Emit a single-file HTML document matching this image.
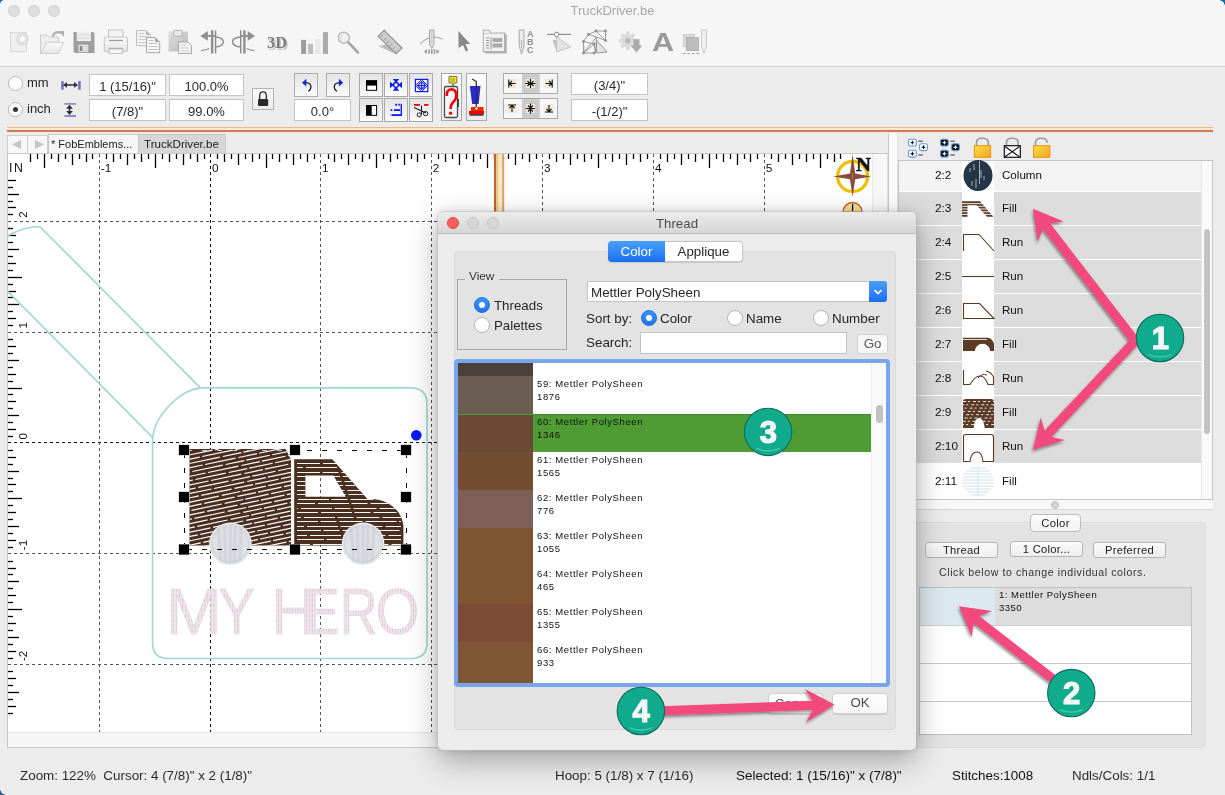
<!DOCTYPE html>
<html><head><meta charset="utf-8">
<style>
*{box-sizing:border-box}
html,body{margin:0;padding:0}
body{width:1225px;height:795px;overflow:hidden;position:relative;background:#ececec;will-change:transform;font-family:"Liberation Sans",sans-serif;color:#222}
.a{position:absolute}
.fld{position:absolute;background:#fff;border:1px solid #c4c4c4;font-size:13px;text-align:center;line-height:23px;color:#2a2a2a}
.btn{position:absolute;background:linear-gradient(#fafafa,#f0f0f0);border:1px solid #bdbdbd}
.tb{position:absolute;top:0;left:0;width:1225px;height:67px;background:#f6f6f6;border-bottom:1px solid #d3d3d3}
.tl{position:absolute;top:5px;width:12px;height:12px;border-radius:50%;background:#dddddd;border:1px solid #d0d0d0}
.radio{position:absolute;width:15px;height:15px;border-radius:50%;background:#fff;border:1px solid #b5b5b5}
.rsel{background:#fff}
.rsel::after{content:"";position:absolute;left:4px;top:4px;width:5px;height:5px;border-radius:50%;background:#333}
.t13{font-size:13px}
</style></head>
<body>
<!-- window top toolbar -->
<div class="tb"></div>
<div class="tl" style="left:8px"></div>
<div class="tl" style="left:28px"></div>
<div class="tl" style="left:48px"></div>
<div class="a" style="left:0;width:1225px;top:3px;text-align:center;font-size:13px;color:#a9a9a9;line-height:16px">TruckDriver.be</div>
<svg class="a" style="left:0;top:0" width="720" height="66" viewBox="0 0 720 66">
<defs><linearGradient id="lg1" x1="0" y1="0" x2="0" y2="1"><stop offset="0" stop-color="#fafafa"/><stop offset="1" stop-color="#e4e4e4"/></linearGradient><linearGradient id="lg2" x1="0" y1="0" x2="1" y2="1"><stop offset="0" stop-color="#e0e0e0"/><stop offset="1" stop-color="#b8b8b8"/></linearGradient></defs>
<rect x="10.5" y="32.5" width="16" height="19" fill="#efefef" stroke="#dadada"/>
<circle cx="22.5" cy="38.8" r="6.5" fill="#dedede"/>
<path d="M22.5,34.5 L23.7,37.5 L26.8,37.6 L24.4,39.6 L25.2,42.6 L22.5,40.9 L19.8,42.6 L20.6,39.6 L18.2,37.6 L21.3,37.5 Z" fill="#fbfbfb"/>
<path d="M40.5,53.5 V35 H47 L49,37 H58.5 V53.5 Z" fill="#ededed" stroke="#cfcfcf"/>
<path d="M40.5,53.5 L46.9,42.3 H63.5 L58.5,53.5 Z" fill="url(#lg1)" stroke="#cfcfcf"/>
<path d="M52.5,36.5 Q55,30.5 61,33" fill="none" stroke="#b4b4b4" stroke-width="2.4"/>
<path d="M59,31 L64,31 L64,37 Z" fill="#b0b0b0"/>
<path d="M73.5,32 H93 L94.5,33.5 V53 H75 L73.5,51.5 Z" fill="#9e9e9e"/>
<rect x="76.7" y="31.8" width="14.3" height="9.3" fill="#eeeeee"/>
<line x1="77" y1="35" x2="91" y2="35" stroke="#d2d2d2" stroke-width="0.8"/><line x1="77" y1="38" x2="91" y2="38" stroke="#d2d2d2" stroke-width="0.8"/>
<rect x="78.3" y="44.6" width="10" height="7.5" fill="#dcdcdc"/>
<rect x="79.8" y="46" width="2.5" height="5" fill="#8a8a8a"/>
<rect x="108.5" y="30" width="14.4" height="10" fill="#f3f3f3" stroke="#c4c4c4"/>
<rect x="104.3" y="37" width="23.2" height="14.6" rx="2" fill="url(#lg1)" stroke="#c2c2c2"/>
<line x1="109" y1="40.5" x2="123" y2="40.5" stroke="#9c9c9c" stroke-width="1.3"/>
<line x1="109" y1="48.5" x2="123" y2="48.5" stroke="#9c9c9c" stroke-width="1.3"/>
<rect x="109" y="49" width="13.5" height="4.5" fill="#f5f5f5" stroke="#c4c4c4"/>
<path d="M136.5,30.5 H146 L150.5,35 V45.8 H136.5 Z" fill="#f2f2f2" stroke="#bdbdbd"/>
<path d="M146,30.5 V35 H150.5 Z" fill="#b5b5b5"/>
<g stroke="#c8c8c8" stroke-width="0.9"><line x1="138.5" y1="33.5" x2="144" y2="33.5"/><line x1="138.5" y1="36.5" x2="148.5" y2="36.5"/><line x1="138.5" y1="39.5" x2="148.5" y2="39.5"/><line x1="138.5" y1="42.5" x2="148.5" y2="42.5"/></g>
<path d="M146.5,37.5 H155 L159.7,42 V52.7 H146.5 Z" fill="#f5f5f5" stroke="#a8a8a8"/>
<path d="M155,37.5 V42 H159.7 Z" fill="#aaaaaa"/>
<g stroke="#bdbdbd" stroke-width="0.9"><line x1="148.5" y1="40.5" x2="153.5" y2="40.5"/><line x1="148.5" y1="43.5" x2="157.5" y2="43.5"/><line x1="148.5" y1="46.5" x2="157.5" y2="46.5"/><line x1="148.5" y1="49.5" x2="157.5" y2="49.5"/></g>
<rect x="168.5" y="31.5" width="19.5" height="20" fill="url(#lg2)"/>
<rect x="173.6" y="30.3" width="8.6" height="6" rx="1" fill="#e8e8e8" stroke="#a5a5a5" stroke-width="0.8"/>
<path d="M178.5,42 H188 L191.5,45.5 V53.5 H178.5 Z" fill="#f3f3f3" stroke="#a9a9a9"/>
<g stroke="#c0c0c0" stroke-width="0.8"><line x1="180.5" y1="45" x2="186" y2="45"/><line x1="180.5" y1="48" x2="189.5" y2="48"/><line x1="180.5" y1="51" x2="189.5" y2="51"/></g>
<rect x="210.9" y="30.3" width="2.4" height="23.2" fill="#8f8f8f"/><rect x="214.8" y="30.3" width="1.5" height="23.2" fill="#8f8f8f"/>
<path d="M200.4,35.9 L207.8,31 V40.7 Z" fill="#8f8f8f"/><rect x="207" y="35" width="9" height="1.8" fill="#8f8f8f"/>
<path d="M216,37 Q223.5,38 223.3,42.3 Q223,46 216,47" fill="none" stroke="#8f8f8f" stroke-width="1.5"/>
<path d="M201.2,50.7 Q205,50.5 209.3,48.5" fill="none" stroke="#8f8f8f" stroke-width="1.2"/>
<rect x="240" y="30.3" width="1.5" height="23.2" fill="#8f8f8f"/><rect x="243.2" y="30.3" width="2.4" height="23.2" fill="#8f8f8f"/>
<path d="M255.1,35.9 L247.7,31 V40.7 Z" fill="#8f8f8f"/><rect x="240" y="35" width="9" height="1.8" fill="#8f8f8f"/>
<path d="M240,37 Q232,38 232.6,42.3 Q233,46 240,47" fill="none" stroke="#8f8f8f" stroke-width="1.5"/>
<path d="M254.5,50.7 Q250.5,50.5 246.5,48.5" fill="none" stroke="#8f8f8f" stroke-width="1.2"/>
<text x="268.5" y="49.5" font-family="Liberation Serif" font-weight="bold" font-size="17" fill="#c9c9c9" textLength="20" lengthAdjust="spacingAndGlyphs">3D</text>
<text x="267" y="48.3" font-family="Liberation Serif" font-weight="bold" font-size="17" fill="#7e7e7e" textLength="20" lengthAdjust="spacingAndGlyphs">3D</text>
<rect x="301.1" y="39.9" width="5" height="14" fill="#9d9d9d"/><rect x="308.1" y="43.8" width="4.9" height="10.2" fill="#bcbcbc"/><rect x="315.2" y="39.1" width="5.3" height="14.9" fill="#e9e9e9"/><rect x="322.9" y="32.1" width="5.1" height="21.9" fill="#ababab"/>
<line x1="348" y1="42" x2="358" y2="52.5" stroke="#a7a7a7" stroke-width="2.6" stroke-linecap="round"/>
<circle cx="343.8" cy="37.7" r="5.5" fill="#f0f0f0" stroke="#b8b8b8" stroke-width="1.4"/>
<path d="M341,39.5 Q340,36.5 342.5,35" fill="none" stroke="#c9c9c9" stroke-width="0.9"/>
<path d="M378.5,46 L394,53.5 L388,44 Z" fill="#bdbdbd"/>
<path d="M378.1,36.3 L384.2,30.2 L402,48.1 L396,53.7 Z" fill="#cbcbcb" stroke="#8c8c8c" stroke-width="1.1"/>
<g stroke="#8c8c8c" stroke-width="0.8"><line x1="383" y1="35" x2="381" y2="37"/><line x1="386" y1="38" x2="384" y2="40"/><line x1="389" y1="41" x2="387" y2="43"/><line x1="392" y1="44" x2="390" y2="46"/><line x1="395" y1="47" x2="393" y2="49"/></g>
<path d="M420.1,43.9 Q431,33 442.6,39.3" fill="none" stroke="#a8a8a8" stroke-width="1.1"/>
<path d="M429.5,30 H434 V44 L431.8,48.5 L429.5,44 Z" fill="#e6e6e6" stroke="#9c9c9c" stroke-width="0.9"/>
<line x1="431.8" y1="31" x2="431.8" y2="44" stroke="#b0b0b0" stroke-width="0.7"/>
<path d="M424,51.5 L427,49 V54 Z M439.5,51.5 L436.5,49 V54 Z" fill="#9a9a9a"/><rect x="428.3" y="49.2" width="1.6" height="4.6" fill="#9a9a9a"/><rect x="431" y="49.2" width="1.6" height="4.6" fill="#9a9a9a"/><rect x="433.7" y="49.2" width="1.6" height="4.6" fill="#9a9a9a"/>
<path d="M458.4,31.1 L470.1,43.9 L465.5,43.9 L468.2,50.5 L465.8,51.6 L463,45 L458.6,48 Z" fill="#888888"/>
<path d="M458.5,48.5 L457.5,52.3" stroke="#d8d8d8" stroke-width="0.8"/>
<path d="M485.5,53.6 L483.2,51.5 V33 H504.6 L506.8,35 V53.6 Z" fill="#b0b0b0"/>
<rect x="483.2" y="33" width="21.4" height="18.5" fill="#f1f1f1" stroke="#a9a9a9" stroke-width="0.9"/>
<path d="M483.2,33 V30.1 H489.5 L490.5,33" fill="#f1f1f1" stroke="#a9a9a9" stroke-width="0.9"/>
<g stroke="#8a8a8a" stroke-width="0.9"><line x1="486" y1="38" x2="489" y2="38"/><line x1="486" y1="40.5" x2="489" y2="40.5"/><line x1="486" y1="43" x2="489" y2="43"/><line x1="486" y1="45.5" x2="489" y2="45.5"/><line x1="486" y1="48" x2="489" y2="48"/><line x1="491" y1="37" x2="491" y2="49.5"/></g>
<rect x="492.5" y="38" width="9.8" height="4" fill="#a8a8a8"/><rect x="492.5" y="43.5" width="9.8" height="4" fill="#a8a8a8"/>
<path d="M519.2,30 H524 V46 L521.6,54 L519.2,46 Z" fill="#ececec" stroke="#a0a0a0" stroke-width="0.9"/>
<line x1="521.6" y1="40" x2="521.6" y2="48" stroke="#a0a0a0" stroke-width="0.8"/>
<text x="527" y="37.3" font-family="Liberation Sans" font-weight="bold" font-size="9" fill="#8e8e8e">A</text><text x="527" y="45.3" font-family="Liberation Sans" font-weight="bold" font-size="9" fill="#8e8e8e">B</text><text x="527" y="53.3" font-family="Liberation Sans" font-weight="bold" font-size="9" fill="#8e8e8e">C</text>
<line x1="547" y1="34.4" x2="571" y2="34.4" stroke="#8e8e8e" stroke-width="1.2"/>
<path d="M552.5,40 L556.6,52 L557,40 Z" fill="#c3c3c3"/>
<path d="M556.6,36.5 L571,47 L556.6,52 Z" fill="#e3e3e3" stroke="#bcbcbc" stroke-width="0.8"/>
<circle cx="556.6" cy="34.4" r="2.2" fill="#fafafa" stroke="#8e8e8e" stroke-width="1"/>
<g fill="none" stroke="#9a9a9a" stroke-width="1">
<path d="M583.5,53 V41.5 L588.5,34.5 L596,31 H605.5 V40.5 L596.5,37 Z M596,31 L605.5,40.5 M588.5,34.5 L596.5,37 L595.5,53 M583.5,41.5 L594,44 M583.5,53 L594,44 L595.5,53 Z M583.5,41.5 L584,53"/>
<path d="M596.5,40 L607,52 L596.5,53 Z" fill="#e4e4e4"/>
</g>
<g fill="#8f8f8f"><circle cx="588.5" cy="34.5" r="1.4"/><circle cx="596" cy="31" r="1.4"/><circle cx="605.5" cy="31" r="1.4"/><circle cx="605.5" cy="40.5" r="1.4"/><circle cx="583.5" cy="41.5" r="1.4"/><circle cx="594" cy="44" r="1.4"/><circle cx="583.5" cy="53" r="1.4"/><circle cx="594" cy="53" r="1.4"/></g>
<g fill="#dcdcdc"><rect x="626" y="31.5" width="3.6" height="4" transform="rotate(0 627.8 40.7)"/><rect x="626" y="31.5" width="3.6" height="4" transform="rotate(45 627.8 40.7)"/><rect x="626" y="31.5" width="3.6" height="4" transform="rotate(90 627.8 40.7)"/><rect x="626" y="31.5" width="3.6" height="4" transform="rotate(135 627.8 40.7)"/><rect x="626" y="31.5" width="3.6" height="4" transform="rotate(180 627.8 40.7)"/><rect x="626" y="31.5" width="3.6" height="4" transform="rotate(225 627.8 40.7)"/><rect x="626" y="31.5" width="3.6" height="4" transform="rotate(270 627.8 40.7)"/><rect x="626" y="31.5" width="3.6" height="4" transform="rotate(315 627.8 40.7)"/><circle cx="627.8" cy="40.7" r="6.8"/></g>
<circle cx="627.8" cy="40.7" r="2.8" fill="#b9b9b9"/>
<path d="M633.5,39.3 H639.5 V45.5 H642.3 L636.5,52.7 L630.7,45.5 H633.5 Z" fill="#ababab"/>
<text x="652" y="50.6" font-family="Liberation Sans" font-weight="bold" font-size="25" fill="#9a9a9a" textLength="22.2" lengthAdjust="spacingAndGlyphs">A</text>
<rect x="683.5" y="34.5" width="11" height="12" fill="#dadada" stroke="#c4c4c4" stroke-width="0.8"/>
<rect x="686.5" y="37.5" width="12" height="13" fill="#bdbdbd" stroke="#aaaaaa" stroke-width="0.8"/>
<path d="M701.5,30 H706.5 V47 L704,53 L701.5,47 Z" fill="#f0f0f0" stroke="#bdbdbd" stroke-width="0.8"/>
<line x1="683" y1="53.5" x2="701" y2="53.5" stroke="#8e8e8e" stroke-width="0.9" stroke-dasharray="2.5 2"/>
</svg>

<!-- toolbar 2 -->
<div class="radio" style="left:8px;top:76px"></div>
<div class="a t13" style="left:27px;top:75px;line-height:16px;color:#262626">mm</div>
<div class="radio rsel" style="left:8px;top:102px"></div>
<div class="a t13" style="left:27px;top:101px;line-height:16px;color:#262626">inch</div>
<div class="fld" style="left:89px;top:74px;width:77px;height:22px">1 (15/16)"</div>
<div class="fld" style="left:169px;top:74px;width:75px;height:22px">100.0%</div>
<div class="fld" style="left:89px;top:99px;width:77px;height:22px">(7/8)"</div>
<div class="fld" style="left:169px;top:99px;width:75px;height:22px">99.0%</div>

<div class="fld" style="left:294px;top:99px;width:57px;height:22px">0.0°</div>
<svg class="a" style="left:0;top:66px" width="720" height="62" viewBox="0 66 720 62">
<defs><linearGradient id="bg2" x1="0" y1="0" x2="0" y2="1"><stop offset="0" stop-color="#e3e3e3"/><stop offset="1" stop-color="#fbfbfb"/></linearGradient><linearGradient id="bg3" x1="0" y1="0" x2="0" y2="1"><stop offset="0" stop-color="#fdfdfd"/><stop offset="1" stop-color="#ececec"/></linearGradient></defs>
<rect x="61.2" y="81.1" width="2.5" height="8.6" fill="#7070b8"/><rect x="78.2" y="81.1" width="2.5" height="8.6" fill="#7070b8"/>
<path d="M63,84.9 L67,82 V87.8 Z M78,84.9 L74,82 V87.8 Z" fill="#2c2c3c"/><rect x="66" y="84.2" width="9" height="1.5" fill="#2c2c3c"/>
<rect x="64.5" y="103.2" width="11.5" height="1.4" fill="#7878b0"/><rect x="64.5" y="115.2" width="11.5" height="1.6" fill="#7070b8"/>
<path d="M69.5,104.8 L66.2,108.8 H72.8 Z M69.5,115 L66.2,111 H72.8 Z" fill="#2c2c3c"/><rect x="68.8" y="108" width="1.5" height="4" fill="#2c2c3c"/>
<rect x="252.5" y="88.5" width="21" height="21" fill="url(#bg3)" stroke="#b2b2b2"/>
<path d="M259.7,99.5 V95.5 Q259.7,91.8 263,91.8 Q266.3,91.8 266.3,95.5 V99.5" fill="none" stroke="#2a2a2a" stroke-width="1.3"/>
<rect x="258" y="99" width="10.2" height="7" rx="1.2" fill="#2a2a2a"/>
<rect x="294.5" y="73.5" width="23" height="23" fill="url(#bg2)" stroke="#adadad"/>
<rect x="326.5" y="73.5" width="23" height="23" fill="url(#bg2)" stroke="#adadad"/>
<path d="M302,82.7 L306.3,78.7 V86.5 Z" fill="#0d28f0"/>
<path d="M305.5,82.7 Q311,83 311,87 Q311,89.5 308.3,91.2" fill="none" stroke="#111" stroke-width="1.2"/>
<path d="M343.2,82.7 L338.9,78.7 V86.5 Z" fill="#0d28f0"/>
<path d="M339.7,82.7 Q334.2,83 334.2,87 Q334.2,89.5 336.9,91.2" fill="none" stroke="#111" stroke-width="1.2"/>
<rect x="359.5" y="73.5" width="23" height="23" fill="url(#bg2)" stroke="#a9a9a9"/>
<rect x="359.5" y="98.5" width="23" height="23" fill="url(#bg2)" stroke="#a9a9a9"/>
<rect x="384.5" y="73.5" width="23" height="23" fill="url(#bg2)" stroke="#a9a9a9"/>
<rect x="384.5" y="98.5" width="23" height="23" fill="url(#bg2)" stroke="#a9a9a9"/>
<rect x="409.5" y="73.5" width="23" height="23" fill="url(#bg2)" stroke="#a9a9a9"/>
<rect x="409.5" y="98.5" width="23" height="23" fill="url(#bg2)" stroke="#a9a9a9"/>
<rect x="366" y="80.1" width="11.1" height="10.7" fill="#000"/><rect x="367.2" y="85.6" width="8.8" height="4.2" fill="#fff"/>
<rect x="366" y="105" width="11.1" height="10.8" fill="#000"/><rect x="371.7" y="106" width="4.4" height="8.8" fill="#fff"/>
<path d="M392.8,79 H399.2 L396,83 Z M392.8,90.8 H399.2 L396,86.8 Z M390,81.7 V88.1 L394,84.9 Z M402,81.7 V88.1 L398,84.9 Z" fill="#0d1cf0"/>
<circle cx="396" cy="84.9" r="2.4" fill="#f6f2c8" stroke="#0d1cf0" stroke-width="1.3"/>
<rect x="415.4" y="79.4" width="12.4" height="12.2" fill="#fafafa" stroke="#0d1cf0" stroke-width="1.2"/>
<path d="M421.6,79.6 L427.6,85.5 L421.6,91.4 L415.6,85.5 Z" fill="none" stroke="#0d1cf0" stroke-width="1"/>
<circle cx="421.6" cy="85.5" r="3" fill="none" stroke="#0d1cf0" stroke-width="1.1"/>
<path d="M421.6,81 V90 M417,85.5 H426.2" stroke="#0d1cf0" stroke-width="1.1"/>
<g fill="#0d1cf0"><rect x="395.2" y="103.8" width="2" height="1.8"/><rect x="398.3" y="103.8" width="1.6" height="1.8"/><rect x="400.6" y="103.8" width="1.4" height="12.2"/><rect x="390.2" y="114.2" width="11.8" height="1.8"/><rect x="394" y="109.2" width="6" height="1.8"/><rect x="390.5" y="109.2" width="1.8" height="1.8"/><rect x="390.2" y="114.2" width="1.8" height="1.8" fill="#fff" opacity="0.6"/></g>
<rect x="414" y="104" width="6" height="1.8" fill="#f00000"/><rect x="424" y="104" width="4.4" height="1.8" fill="#f00000"/>
<path d="M414,107.5 L426,113 M421.5,105.5 L421.5,114.5" stroke="#222" stroke-width="1.2" fill="none"/>
<circle cx="419.2" cy="114.8" r="2" fill="none" stroke="#222" stroke-width="1"/><circle cx="425.6" cy="113.6" r="2.2" fill="none" stroke="#222" stroke-width="1"/>
<rect x="441.5" y="73.5" width="20" height="47" fill="url(#bg3)" stroke="#a9a9a9"/>
<rect x="444.5" y="86.5" width="13" height="31" rx="1.5" fill="#f7f7f7" stroke="#4a4a4a" stroke-width="1.3"/>
<rect x="457.5" y="99" width="1.4" height="8" fill="#333"/>
<path d="M449,76.5 H456.8 V83 H454.5 L453,86 L452.5,83 H449 Z" fill="#f7f000" stroke="#555" stroke-width="0.8"/>
<line x1="450.5" y1="79" x2="455" y2="79" stroke="#777" stroke-width="0.8"/><line x1="450.5" y1="81" x2="455" y2="81" stroke="#777" stroke-width="0.8"/>
<path d="M446.8,96 Q446.5,89.5 451.3,89.3 Q456.3,89.3 456.3,95.5 Q456.3,99.5 452.8,102.5 Q450.6,104.8 450.6,109" fill="none" stroke="#f00000" stroke-width="2.6"/><circle cx="450.6" cy="113.3" r="1.7" fill="#f00000"/>
<rect x="466.5" y="73.5" width="20" height="47" fill="url(#bg3)" stroke="#a9a9a9"/>
<path d="M469.8,86 H480.5 L478.6,104 H472.2 Z" fill="#2a2ad0"/>
<path d="M472,79 L476.3,81.5 V108" fill="none" stroke="#333" stroke-width="1.3"/>
<rect x="471" y="107" width="12.5" height="4" fill="#f02800"/><rect x="469" y="111" width="15" height="3" fill="#f00000"/><rect x="469.5" y="114" width="14" height="1.8" fill="#444"/>
<circle cx="476.5" cy="108.5" r="1.2" fill="#eee"/>
<rect x="503.5" y="73.5" width="54" height="20" fill="#f6f6f6" stroke="#a9a9a9"/>
<rect x="522" y="74.0" width="17.7" height="19" fill="#cbcbcb"/>
<rect x="503.5" y="98.5" width="54" height="20" fill="#f6f6f6" stroke="#a9a9a9"/>
<rect x="522" y="99.0" width="17.7" height="19" fill="#cbcbcb"/>
<rect x="507.5" y="79.0" width="9" height="9" fill="#efe9d6"/>
<rect x="526.0" y="79.0" width="9" height="9" fill="#efe9d6"/>
<rect x="544.5" y="79.0" width="9" height="9" fill="#efe9d6"/>
<rect x="507.5" y="104.0" width="9" height="9" fill="#efe9d6"/>
<rect x="526.0" y="104.0" width="9" height="9" fill="#efe9d6"/>
<rect x="544.5" y="104.0" width="9" height="9" fill="#efe9d6"/>
<g stroke="#111" stroke-width="1.1" fill="none">
<path d="M508.8,79.5 V87.5 M509.5,83.5 H515.5 M512,81 L509.5,83.5 L512,86"/>
<path d="M530.5,79 V88 M525.5,83.5 H535.5 M527.5,81 L530,83.5 L527.5,86 M533.5,81 L531,83.5 L533.5,86"/>
<path d="M552.2,79.5 V87.5 M545.5,83.5 H551.5 M549,81 L551.5,83.5 L549,86"/>
<path d="M508,105 H516 M512,105.5 V112 M509.5,108 L512,105.5 L514.5,108"/>
<path d="M526,108.5 H535 M530.5,103.5 V113.5 M528,105.5 L530.5,108 L533,105.5 M528,111.5 L530.5,109 L533,111.5"/>
<path d="M545,112 H553 M549,105 V111.5 M546.5,109 L549,111.5 L551.5,109"/>
</g>
</svg>
<div class="fld" style="left:571px;top:73px;width:77px;height:22px">(3/4)"</div>
<div class="fld" style="left:571px;top:99px;width:77px;height:22px">-(1/2)"</div>

<!-- orange line -->
<div class="a" style="left:7px;top:127px;width:1206px;height:5px;background:linear-gradient(#e9b97c 0,#ecc08a 1.5px,#fde9da 1.5px,#fbe3d2 3px,#d58050 3px,#cf7848 5px)"></div>
<div class="a" style="left:888px;top:133px;width:10px;height:615px;background:#fcfcfc;border-left:1.5px solid #c9c9c9;border-right:1px solid #dedede"></div>

<!-- tabs -->
<div class="a" style="left:7px;top:135px;width:21px;height:19px;background:#f7f7f7;border:1px solid #d0d0d0"></div>
<div class="a" style="left:27px;top:135px;width:21px;height:19px;background:#f7f7f7;border:1px solid #d0d0d0"></div>
<svg class="a" style="left:7px;top:135px" width="42" height="19"><path d="M5,9.5 L14,5 V14 Z M37,9.5 L28,5 V14 Z" fill="#c6c6c6"/></svg>
<div class="a" style="left:48px;top:134px;width:91px;height:20px;background:#f6f6f6;border:1px solid #c9c9c9;border-bottom:none"></div>
<div class="a" style="left:138px;top:134px;width:88px;height:20px;background:#d6d6d6;border:1px solid #c9c9c9;border-bottom:none"></div>
<div class="a" style="left:51px;top:137px;font-size:11px;line-height:14px;color:#222">* FobEmblems...</div>
<div class="a" style="left:144px;top:137px;font-size:11.6px;line-height:14px;color:#222">TruckDriver.be</div>

<!-- canvas -->
<svg class="a" style="left:0;top:0" width="1225" height="795" viewBox="0 0 1225 795">
<defs><clipPath id="cv"><rect x="8" y="154" width="864" height="578"/></clipPath></defs>
<rect x="7.5" y="153.5" width="880" height="594" fill="#fff" stroke="#c8c8c8"/>
<rect x="872" y="154" width="15.5" height="578" fill="#f7f7f7"/>
<line x1="872.5" y1="154" x2="872.5" y2="732" stroke="#e9e9e9"/>
<rect x="8" y="732" width="879.5" height="15" fill="#f7f7f7"/>
<line x1="8" y1="732.5" x2="887" y2="732.5" stroke="#e6e6e6"/>
<g clip-path="url(#cv)">
<rect x="29.85" y="154" width="1.3" height="8" fill="#000"/>
<rect x="36.85" y="154" width="1.3" height="5" fill="#000"/>
<rect x="43.85" y="154" width="1.3" height="14" fill="#000"/>
<rect x="50.85" y="154" width="1.3" height="5" fill="#000"/>
<rect x="57.85" y="154" width="1.3" height="8" fill="#000"/>
<rect x="64.85" y="154" width="1.3" height="5" fill="#000"/>
<rect x="71.85" y="154" width="1.3" height="11" fill="#000"/>
<rect x="78.85" y="154" width="1.3" height="5" fill="#000"/>
<rect x="85.85" y="154" width="1.3" height="8" fill="#000"/>
<rect x="91.85" y="154" width="1.3" height="5" fill="#000"/>
<rect x="105.85" y="154" width="1.3" height="5" fill="#000"/>
<rect x="112.85" y="154" width="1.3" height="8" fill="#000"/>
<rect x="119.85" y="154" width="1.3" height="5" fill="#000"/>
<rect x="126.85" y="154" width="1.3" height="11" fill="#000"/>
<rect x="133.85" y="154" width="1.3" height="5" fill="#000"/>
<rect x="140.85" y="154" width="1.3" height="8" fill="#000"/>
<rect x="147.85" y="154" width="1.3" height="5" fill="#000"/>
<rect x="154.85" y="154" width="1.3" height="14" fill="#000"/>
<rect x="161.85" y="154" width="1.3" height="5" fill="#000"/>
<rect x="168.85" y="154" width="1.3" height="8" fill="#000"/>
<rect x="175.85" y="154" width="1.3" height="5" fill="#000"/>
<rect x="182.85" y="154" width="1.3" height="11" fill="#000"/>
<rect x="189.85" y="154" width="1.3" height="5" fill="#000"/>
<rect x="196.85" y="154" width="1.3" height="8" fill="#000"/>
<rect x="203.85" y="154" width="1.3" height="5" fill="#000"/>
<rect x="216.85" y="154" width="1.3" height="5" fill="#000"/>
<rect x="223.85" y="154" width="1.3" height="8" fill="#000"/>
<rect x="230.85" y="154" width="1.3" height="5" fill="#000"/>
<rect x="237.85" y="154" width="1.3" height="11" fill="#000"/>
<rect x="244.85" y="154" width="1.3" height="5" fill="#000"/>
<rect x="251.85" y="154" width="1.3" height="8" fill="#000"/>
<rect x="258.85" y="154" width="1.3" height="5" fill="#000"/>
<rect x="265.85" y="154" width="1.3" height="14" fill="#000"/>
<rect x="271.85" y="154" width="1.3" height="5" fill="#000"/>
<rect x="278.85" y="154" width="1.3" height="8" fill="#000"/>
<rect x="285.85" y="154" width="1.3" height="5" fill="#000"/>
<rect x="292.85" y="154" width="1.3" height="11" fill="#000"/>
<rect x="299.85" y="154" width="1.3" height="5" fill="#000"/>
<rect x="306.85" y="154" width="1.3" height="8" fill="#000"/>
<rect x="313.85" y="154" width="1.3" height="5" fill="#000"/>
<rect x="327.85" y="154" width="1.3" height="5" fill="#000"/>
<rect x="333.85" y="154" width="1.3" height="8" fill="#000"/>
<rect x="340.85" y="154" width="1.3" height="5" fill="#000"/>
<rect x="347.85" y="154" width="1.3" height="11" fill="#000"/>
<rect x="354.85" y="154" width="1.3" height="5" fill="#000"/>
<rect x="361.85" y="154" width="1.3" height="8" fill="#000"/>
<rect x="368.85" y="154" width="1.3" height="5" fill="#000"/>
<rect x="375.85" y="154" width="1.3" height="14" fill="#000"/>
<rect x="382.85" y="154" width="1.3" height="5" fill="#000"/>
<rect x="389.85" y="154" width="1.3" height="8" fill="#000"/>
<rect x="396.85" y="154" width="1.3" height="5" fill="#000"/>
<rect x="403.85" y="154" width="1.3" height="11" fill="#000"/>
<rect x="410.85" y="154" width="1.3" height="5" fill="#000"/>
<rect x="416.85" y="154" width="1.3" height="8" fill="#000"/>
<rect x="423.85" y="154" width="1.3" height="5" fill="#000"/>
<rect x="437.85" y="154" width="1.3" height="5" fill="#000"/>
<rect x="444.85" y="154" width="1.3" height="8" fill="#000"/>
<rect x="451.85" y="154" width="1.3" height="5" fill="#000"/>
<rect x="458.85" y="154" width="1.3" height="11" fill="#000"/>
<rect x="465.85" y="154" width="1.3" height="5" fill="#000"/>
<rect x="472.85" y="154" width="1.3" height="8" fill="#000"/>
<rect x="479.85" y="154" width="1.3" height="5" fill="#000"/>
<rect x="486.85" y="154" width="1.3" height="14" fill="#000"/>
<rect x="493.85" y="154" width="1.3" height="5" fill="#000"/>
<rect x="500.85" y="154" width="1.3" height="8" fill="#000"/>
<rect x="507.85" y="154" width="1.3" height="5" fill="#000"/>
<rect x="514.85" y="154" width="1.3" height="11" fill="#000"/>
<rect x="521.85" y="154" width="1.3" height="5" fill="#000"/>
<rect x="528.85" y="154" width="1.3" height="8" fill="#000"/>
<rect x="535.85" y="154" width="1.3" height="5" fill="#000"/>
<rect x="548.85" y="154" width="1.3" height="5" fill="#000"/>
<rect x="555.85" y="154" width="1.3" height="8" fill="#000"/>
<rect x="562.85" y="154" width="1.3" height="5" fill="#000"/>
<rect x="569.85" y="154" width="1.3" height="11" fill="#000"/>
<rect x="576.85" y="154" width="1.3" height="5" fill="#000"/>
<rect x="583.85" y="154" width="1.3" height="8" fill="#000"/>
<rect x="590.85" y="154" width="1.3" height="5" fill="#000"/>
<rect x="597.85" y="154" width="1.3" height="14" fill="#000"/>
<rect x="604.85" y="154" width="1.3" height="5" fill="#000"/>
<rect x="611.85" y="154" width="1.3" height="8" fill="#000"/>
<rect x="618.85" y="154" width="1.3" height="5" fill="#000"/>
<rect x="625.85" y="154" width="1.3" height="11" fill="#000"/>
<rect x="632.85" y="154" width="1.3" height="5" fill="#000"/>
<rect x="639.85" y="154" width="1.3" height="8" fill="#000"/>
<rect x="646.85" y="154" width="1.3" height="5" fill="#000"/>
<rect x="659.85" y="154" width="1.3" height="5" fill="#000"/>
<rect x="666.85" y="154" width="1.3" height="8" fill="#000"/>
<rect x="673.85" y="154" width="1.3" height="5" fill="#000"/>
<rect x="680.85" y="154" width="1.3" height="11" fill="#000"/>
<rect x="687.85" y="154" width="1.3" height="5" fill="#000"/>
<rect x="694.85" y="154" width="1.3" height="8" fill="#000"/>
<rect x="701.85" y="154" width="1.3" height="5" fill="#000"/>
<rect x="708.85" y="154" width="1.3" height="14" fill="#000"/>
<rect x="715.85" y="154" width="1.3" height="5" fill="#000"/>
<rect x="722.85" y="154" width="1.3" height="8" fill="#000"/>
<rect x="729.85" y="154" width="1.3" height="5" fill="#000"/>
<rect x="736.85" y="154" width="1.3" height="11" fill="#000"/>
<rect x="743.85" y="154" width="1.3" height="5" fill="#000"/>
<rect x="749.85" y="154" width="1.3" height="8" fill="#000"/>
<rect x="756.85" y="154" width="1.3" height="5" fill="#000"/>
<rect x="770.85" y="154" width="1.3" height="5" fill="#000"/>
<rect x="777.85" y="154" width="1.3" height="8" fill="#000"/>
<rect x="784.85" y="154" width="1.3" height="5" fill="#000"/>
<rect x="791.85" y="154" width="1.3" height="11" fill="#000"/>
<rect x="798.85" y="154" width="1.3" height="5" fill="#000"/>
<rect x="805.85" y="154" width="1.3" height="8" fill="#000"/>
<rect x="812.85" y="154" width="1.3" height="5" fill="#000"/>
<rect x="819.85" y="154" width="1.3" height="14" fill="#000"/>
<rect x="826.85" y="154" width="1.3" height="5" fill="#000"/>
<rect x="833.85" y="154" width="1.3" height="8" fill="#000"/>
<rect x="839.85" y="154" width="1.3" height="5" fill="#000"/>
<rect x="8" y="179.85" width="8" height="1.3" fill="#000"/>
<rect x="8" y="186.85" width="5" height="1.3" fill="#000"/>
<rect x="8" y="193.85" width="11" height="1.3" fill="#000"/>
<rect x="8" y="200.85" width="5" height="1.3" fill="#000"/>
<rect x="8" y="206.85" width="8" height="1.3" fill="#000"/>
<rect x="8" y="213.85" width="5" height="1.3" fill="#000"/>
<rect x="8" y="227.85" width="5" height="1.3" fill="#000"/>
<rect x="8" y="234.85" width="8" height="1.3" fill="#000"/>
<rect x="8" y="241.85" width="5" height="1.3" fill="#000"/>
<rect x="8" y="248.85" width="11" height="1.3" fill="#000"/>
<rect x="8" y="255.85" width="5" height="1.3" fill="#000"/>
<rect x="8" y="262.85" width="8" height="1.3" fill="#000"/>
<rect x="8" y="269.85" width="5" height="1.3" fill="#000"/>
<rect x="8" y="276.85" width="14" height="1.3" fill="#000"/>
<rect x="8" y="283.85" width="5" height="1.3" fill="#000"/>
<rect x="8" y="290.85" width="8" height="1.3" fill="#000"/>
<rect x="8" y="296.85" width="5" height="1.3" fill="#000"/>
<rect x="8" y="303.85" width="11" height="1.3" fill="#000"/>
<rect x="8" y="310.85" width="5" height="1.3" fill="#000"/>
<rect x="8" y="317.85" width="8" height="1.3" fill="#000"/>
<rect x="8" y="324.85" width="5" height="1.3" fill="#000"/>
<rect x="8" y="338.85" width="5" height="1.3" fill="#000"/>
<rect x="8" y="345.85" width="8" height="1.3" fill="#000"/>
<rect x="8" y="352.85" width="5" height="1.3" fill="#000"/>
<rect x="8" y="359.85" width="11" height="1.3" fill="#000"/>
<rect x="8" y="366.85" width="5" height="1.3" fill="#000"/>
<rect x="8" y="373.85" width="8" height="1.3" fill="#000"/>
<rect x="8" y="380.85" width="5" height="1.3" fill="#000"/>
<rect x="8" y="387.85" width="14" height="1.3" fill="#000"/>
<rect x="8" y="393.85" width="5" height="1.3" fill="#000"/>
<rect x="8" y="400.85" width="8" height="1.3" fill="#000"/>
<rect x="8" y="407.85" width="5" height="1.3" fill="#000"/>
<rect x="8" y="414.85" width="11" height="1.3" fill="#000"/>
<rect x="8" y="421.85" width="5" height="1.3" fill="#000"/>
<rect x="8" y="428.85" width="8" height="1.3" fill="#000"/>
<rect x="8" y="435.85" width="5" height="1.3" fill="#000"/>
<rect x="8" y="449.85" width="5" height="1.3" fill="#000"/>
<rect x="8" y="456.85" width="8" height="1.3" fill="#000"/>
<rect x="8" y="463.85" width="5" height="1.3" fill="#000"/>
<rect x="8" y="470.85" width="11" height="1.3" fill="#000"/>
<rect x="8" y="477.85" width="5" height="1.3" fill="#000"/>
<rect x="8" y="483.85" width="8" height="1.3" fill="#000"/>
<rect x="8" y="490.85" width="5" height="1.3" fill="#000"/>
<rect x="8" y="497.85" width="14" height="1.3" fill="#000"/>
<rect x="8" y="504.85" width="5" height="1.3" fill="#000"/>
<rect x="8" y="511.85" width="8" height="1.3" fill="#000"/>
<rect x="8" y="518.85" width="5" height="1.3" fill="#000"/>
<rect x="8" y="525.85" width="11" height="1.3" fill="#000"/>
<rect x="8" y="532.85" width="5" height="1.3" fill="#000"/>
<rect x="8" y="539.85" width="8" height="1.3" fill="#000"/>
<rect x="8" y="546.85" width="5" height="1.3" fill="#000"/>
<rect x="8" y="560.85" width="5" height="1.3" fill="#000"/>
<rect x="8" y="567.85" width="8" height="1.3" fill="#000"/>
<rect x="8" y="573.85" width="5" height="1.3" fill="#000"/>
<rect x="8" y="580.85" width="11" height="1.3" fill="#000"/>
<rect x="8" y="587.85" width="5" height="1.3" fill="#000"/>
<rect x="8" y="594.85" width="8" height="1.3" fill="#000"/>
<rect x="8" y="601.85" width="5" height="1.3" fill="#000"/>
<rect x="8" y="608.85" width="14" height="1.3" fill="#000"/>
<rect x="8" y="615.85" width="5" height="1.3" fill="#000"/>
<rect x="8" y="622.85" width="8" height="1.3" fill="#000"/>
<rect x="8" y="629.85" width="5" height="1.3" fill="#000"/>
<rect x="8" y="636.85" width="11" height="1.3" fill="#000"/>
<rect x="8" y="643.85" width="5" height="1.3" fill="#000"/>
<rect x="8" y="650.85" width="8" height="1.3" fill="#000"/>
<rect x="8" y="657.85" width="5" height="1.3" fill="#000"/>
<rect x="8" y="670.85" width="5" height="1.3" fill="#000"/>
<rect x="8" y="677.85" width="8" height="1.3" fill="#000"/>
<rect x="8" y="684.85" width="5" height="1.3" fill="#000"/>
<rect x="8" y="691.85" width="11" height="1.3" fill="#000"/>
<rect x="8" y="698.85" width="5" height="1.3" fill="#000"/>
<rect x="8" y="705.85" width="8" height="1.3" fill="#000"/>
<rect x="8" y="712.85" width="5" height="1.3" fill="#000"/>
<line x1="99.50" y1="154" x2="99.50" y2="732" stroke="#555" stroke-width="1" stroke-dasharray="3 3"/>
<line x1="210.50" y1="154" x2="210.50" y2="732" stroke="#111" stroke-width="1" stroke-dasharray="3 3"/>
<line x1="320.50" y1="154" x2="320.50" y2="732" stroke="#555" stroke-width="1" stroke-dasharray="3 3"/>
<line x1="431.50" y1="154" x2="431.50" y2="732" stroke="#555" stroke-width="1" stroke-dasharray="3 3"/>
<line x1="542.50" y1="154" x2="542.50" y2="732" stroke="#555" stroke-width="1" stroke-dasharray="3 3"/>
<line x1="653.50" y1="154" x2="653.50" y2="732" stroke="#555" stroke-width="1" stroke-dasharray="3 3"/>
<line x1="764.50" y1="154" x2="764.50" y2="732" stroke="#555" stroke-width="1" stroke-dasharray="3 3"/>
<line x1="8" y1="221.50" x2="872" y2="221.50" stroke="#555" stroke-width="1" stroke-dasharray="3 3"/>
<line x1="8" y1="332.50" x2="872" y2="332.50" stroke="#555" stroke-width="1" stroke-dasharray="3 3"/>
<line x1="8" y1="442.50" x2="872" y2="442.50" stroke="#111" stroke-width="1" stroke-dasharray="3 3"/>
<line x1="8" y1="553.50" x2="872" y2="553.50" stroke="#555" stroke-width="1" stroke-dasharray="3 3"/>
<line x1="8" y1="664.50" x2="872" y2="664.50" stroke="#555" stroke-width="1" stroke-dasharray="3 3"/>
<text x="9" y="171.8" font-size="12.3" fill="#111" font-family="Liberation Sans" letter-spacing="1.6">IN</text>
<text x="100.8" y="172" font-size="11.8" fill="#111" font-family="Liberation Sans">-1</text>
<text x="211.9" y="172" font-size="11.8" fill="#111" font-family="Liberation Sans">0</text>
<text x="322.0" y="172" font-size="11.8" fill="#111" font-family="Liberation Sans">1</text>
<text x="432.7" y="172" font-size="11.8" fill="#111" font-family="Liberation Sans">2</text>
<text x="543.9" y="172" font-size="11.8" fill="#111" font-family="Liberation Sans">3</text>
<text x="654.9" y="172" font-size="11.8" fill="#111" font-family="Liberation Sans">4</text>
<text x="765.7" y="172" font-size="11.8" fill="#111" font-family="Liberation Sans">5</text>
<text transform="translate(27,661.0) rotate(-90)" x="0" y="0" font-size="11.5" fill="#111" font-family="Liberation Sans">-2</text>
<text transform="translate(27,550.2) rotate(-90)" x="0" y="0" font-size="11.5" fill="#111" font-family="Liberation Sans">-1</text>
<text transform="translate(27,439.4) rotate(-90)" x="0" y="0" font-size="11.5" fill="#111" font-family="Liberation Sans">0</text>
<text transform="translate(27,328.6) rotate(-90)" x="0" y="0" font-size="11.5" fill="#111" font-family="Liberation Sans">1</text>
<text transform="translate(27,217.8) rotate(-90)" x="0" y="0" font-size="11.5" fill="#111" font-family="Liberation Sans">2</text>
<path d="M8,235.7 C20,229 30,226.5 39.7,226.5 L200.4,387.8 L411,387.8 Q427,388 427,404 L427,643 Q427,658.5 411,658.5 L168,658.5 Q152.6,658.5 152.6,643 L152.6,437.3 C155,415 180,390 200.4,387.8 M8,291.5 L152.6,437.3" fill="none" stroke="#a3d9d1" stroke-width="1.7"/>
</g>
</svg>
<svg class="a" style="left:0;top:0" width="1225" height="795" viewBox="0 0 1225 795">
<defs>
<clipPath id="cg"><path d="M189.5,449 L285.7,449 L291,459.7 L291,545.5 L189.5,545.5 Z"/></clipPath>
<clipPath id="cb"><path d="M294.2,459.3 L332.3,459.3 L367.4,499 L378,499.5 C392,503 402,512 403.4,526 L403.4,545.5 L294.2,545.5 Z M305.4,475.6 L305.4,496.8 L345.7,496.8 L333.4,475.6 Z" clip-rule="evenodd"/></clipPath>
</defs>
<path d="M189.5,449 L285.7,449 L291,459.7 L291,545.5 L189.5,545.5 Z" fill="#4a2f21"/>
<path d="M294.2,459.3 L332.3,459.3 L367.4,499 L378,499.5 C392,503 402,512 403.4,526 L403.4,545.5 L294.2,545.5 Z M305.4,475.6 L305.4,496.8 L345.7,496.8 L333.4,475.6 Z" fill="#4a2f21" fill-rule="evenodd"/>
<g clip-path="url(#cg)" stroke="#fff" stroke-width="1.2">
<line x1="189" y1="455.0" x2="292" y2="433.4" stroke-dasharray="24 2.5 31 3 19 2" stroke-dashoffset="0"/>
<line x1="189" y1="459.3" x2="292" y2="437.7" stroke-dasharray="24 2.5 31 3 19 2" stroke-dashoffset="13"/>
<line x1="189" y1="463.6" x2="292" y2="442.0" stroke-dasharray="24 2.5 31 3 19 2" stroke-dashoffset="26"/>
<line x1="189" y1="467.9" x2="292" y2="446.3" stroke-dasharray="24 2.5 31 3 19 2" stroke-dashoffset="10"/>
<line x1="189" y1="472.2" x2="292" y2="450.6" stroke-dasharray="24 2.5 31 3 19 2" stroke-dashoffset="23"/>
<line x1="189" y1="476.5" x2="292" y2="454.9" stroke-dasharray="24 2.5 31 3 19 2" stroke-dashoffset="7"/>
<line x1="189" y1="480.8" x2="292" y2="459.2" stroke-dasharray="24 2.5 31 3 19 2" stroke-dashoffset="20"/>
<line x1="189" y1="485.1" x2="292" y2="463.5" stroke-dasharray="24 2.5 31 3 19 2" stroke-dashoffset="4"/>
<line x1="189" y1="489.4" x2="292" y2="467.8" stroke-dasharray="24 2.5 31 3 19 2" stroke-dashoffset="17"/>
<line x1="189" y1="493.7" x2="292" y2="472.1" stroke-dasharray="24 2.5 31 3 19 2" stroke-dashoffset="1"/>
<line x1="189" y1="498.0" x2="292" y2="476.4" stroke-dasharray="24 2.5 31 3 19 2" stroke-dashoffset="14"/>
<line x1="189" y1="502.3" x2="292" y2="480.7" stroke-dasharray="24 2.5 31 3 19 2" stroke-dashoffset="27"/>
<line x1="189" y1="506.6" x2="292" y2="485.0" stroke-dasharray="24 2.5 31 3 19 2" stroke-dashoffset="11"/>
<line x1="189" y1="510.9" x2="292" y2="489.3" stroke-dasharray="24 2.5 31 3 19 2" stroke-dashoffset="24"/>
<line x1="189" y1="515.2" x2="292" y2="493.6" stroke-dasharray="24 2.5 31 3 19 2" stroke-dashoffset="8"/>
<line x1="189" y1="519.5" x2="292" y2="497.9" stroke-dasharray="24 2.5 31 3 19 2" stroke-dashoffset="21"/>
<line x1="189" y1="523.8" x2="292" y2="502.2" stroke-dasharray="24 2.5 31 3 19 2" stroke-dashoffset="5"/>
<line x1="189" y1="528.1" x2="292" y2="506.5" stroke-dasharray="24 2.5 31 3 19 2" stroke-dashoffset="18"/>
<line x1="189" y1="532.4" x2="292" y2="510.8" stroke-dasharray="24 2.5 31 3 19 2" stroke-dashoffset="2"/>
<line x1="189" y1="536.7" x2="292" y2="515.1" stroke-dasharray="24 2.5 31 3 19 2" stroke-dashoffset="15"/>
<line x1="189" y1="541.0" x2="292" y2="519.4" stroke-dasharray="24 2.5 31 3 19 2" stroke-dashoffset="28"/>
<line x1="189" y1="545.3" x2="292" y2="523.7" stroke-dasharray="24 2.5 31 3 19 2" stroke-dashoffset="12"/>
<line x1="189" y1="549.6" x2="292" y2="528.0" stroke-dasharray="24 2.5 31 3 19 2" stroke-dashoffset="25"/>
<line x1="189" y1="553.9" x2="292" y2="532.3" stroke-dasharray="24 2.5 31 3 19 2" stroke-dashoffset="9"/>
<line x1="189" y1="558.2" x2="292" y2="536.6" stroke-dasharray="24 2.5 31 3 19 2" stroke-dashoffset="22"/>
<line x1="189" y1="562.5" x2="292" y2="540.9" stroke-dasharray="24 2.5 31 3 19 2" stroke-dashoffset="6"/>
<line x1="189" y1="566.8" x2="292" y2="545.2" stroke-dasharray="24 2.5 31 3 19 2" stroke-dashoffset="19"/>
<line x1="189" y1="571.1" x2="292" y2="549.5" stroke-dasharray="24 2.5 31 3 19 2" stroke-dashoffset="3"/>
<line x1="189" y1="575.4" x2="292" y2="553.8" stroke-dasharray="24 2.5 31 3 19 2" stroke-dashoffset="16"/>
<line x1="189" y1="579.7" x2="292" y2="558.1" stroke-dasharray="24 2.5 31 3 19 2" stroke-dashoffset="0"/>
<line x1="189" y1="584.0" x2="292" y2="562.4" stroke-dasharray="24 2.5 31 3 19 2" stroke-dashoffset="13"/>
<line x1="189" y1="588.3" x2="292" y2="566.7" stroke-dasharray="24 2.5 31 3 19 2" stroke-dashoffset="26"/>
<line x1="189" y1="592.6" x2="292" y2="571.0" stroke-dasharray="24 2.5 31 3 19 2" stroke-dashoffset="10"/>
<line x1="189" y1="596.9" x2="292" y2="575.3" stroke-dasharray="24 2.5 31 3 19 2" stroke-dashoffset="23"/>
</g>
<g clip-path="url(#cb)" stroke="#fbf8f6" stroke-width="1">
<line x1="297" y1="463.5" x2="401" y2="463.5" stroke-dasharray="23 3 31 2.5 16 3" stroke-dashoffset="0"/>
<line x1="297" y1="467.5" x2="401" y2="467.5" stroke-dasharray="23 3 31 2.5 16 3" stroke-dashoffset="17"/>
<line x1="297" y1="472.5" x2="401" y2="472.5" stroke-dasharray="23 3 31 2.5 16 3" stroke-dashoffset="34"/>
<line x1="297" y1="476.5" x2="401" y2="476.5" stroke-dasharray="23 3 31 2.5 16 3" stroke-dashoffset="14"/>
<line x1="297" y1="481.5" x2="401" y2="481.5" stroke-dasharray="23 3 31 2.5 16 3" stroke-dashoffset="31"/>
<line x1="297" y1="485.5" x2="401" y2="485.5" stroke-dasharray="23 3 31 2.5 16 3" stroke-dashoffset="11"/>
<line x1="297" y1="490.5" x2="401" y2="490.5" stroke-dasharray="23 3 31 2.5 16 3" stroke-dashoffset="28"/>
<line x1="297" y1="494.5" x2="401" y2="494.5" stroke-dasharray="23 3 31 2.5 16 3" stroke-dashoffset="8"/>
<line x1="297" y1="499.5" x2="401" y2="499.5" stroke-dasharray="23 3 31 2.5 16 3" stroke-dashoffset="25"/>
<line x1="297" y1="503.5" x2="401" y2="503.5" stroke-dasharray="23 3 31 2.5 16 3" stroke-dashoffset="5"/>
<line x1="297" y1="508.5" x2="401" y2="508.5" stroke-dasharray="23 3 31 2.5 16 3" stroke-dashoffset="22"/>
<line x1="297" y1="512.5" x2="401" y2="512.5" stroke-dasharray="23 3 31 2.5 16 3" stroke-dashoffset="2"/>
<line x1="297" y1="517.5" x2="401" y2="517.5" stroke-dasharray="23 3 31 2.5 16 3" stroke-dashoffset="19"/>
<line x1="297" y1="521.5" x2="401" y2="521.5" stroke-dasharray="23 3 31 2.5 16 3" stroke-dashoffset="36"/>
<line x1="297" y1="526.5" x2="401" y2="526.5" stroke-dasharray="23 3 31 2.5 16 3" stroke-dashoffset="16"/>
<line x1="297" y1="530.5" x2="401" y2="530.5" stroke-dasharray="23 3 31 2.5 16 3" stroke-dashoffset="33"/>
<line x1="297" y1="535.5" x2="401" y2="535.5" stroke-dasharray="23 3 31 2.5 16 3" stroke-dashoffset="13"/>
<line x1="297" y1="539.5" x2="401" y2="539.5" stroke-dasharray="23 3 31 2.5 16 3" stroke-dashoffset="30"/>
<line x1="297" y1="544.5" x2="401" y2="544.5" stroke-dasharray="23 3 31 2.5 16 3" stroke-dashoffset="10"/>
</g>
<defs><filter id="wb" x="-20%" y="-20%" width="140%" height="140%"><feGaussianBlur stdDeviation="0.8"/></filter></defs>
<circle cx="230.4" cy="543.8" r="21.2" fill="#fff"/>
<g filter="url(#wb)"><circle cx="230.4" cy="543.8" r="20" fill="#dfe2e5"/><circle cx="230.4" cy="543.8" r="19.3" fill="none" stroke="#c3c8cd" stroke-width="1.6"/>
<line x1="218.4" y1="526" x2="220.8" y2="562" stroke="#a9b0b7" stroke-width="0.9"/>
<line x1="224.4" y1="526" x2="225.6" y2="562" stroke="#a9b0b7" stroke-width="0.9"/>
<line x1="230.4" y1="526" x2="230.4" y2="562" stroke="#a9b0b7" stroke-width="0.9"/>
<line x1="235.4" y1="526" x2="234.4" y2="562" stroke="#a9b0b7" stroke-width="0.9"/>
<line x1="241.4" y1="526" x2="239.20000000000002" y2="562" stroke="#a9b0b7" stroke-width="0.9"/>
</g>
<circle cx="363.1" cy="543.8" r="21.2" fill="#fff"/>
<g filter="url(#wb)"><circle cx="363.1" cy="543.8" r="20" fill="#dfe2e5"/><circle cx="363.1" cy="543.8" r="19.3" fill="none" stroke="#c3c8cd" stroke-width="1.6"/>
<line x1="351.1" y1="526" x2="353.5" y2="562" stroke="#a9b0b7" stroke-width="0.9"/>
<line x1="357.1" y1="526" x2="358.3" y2="562" stroke="#a9b0b7" stroke-width="0.9"/>
<line x1="363.1" y1="526" x2="363.1" y2="562" stroke="#a9b0b7" stroke-width="0.9"/>
<line x1="368.1" y1="526" x2="367.1" y2="562" stroke="#a9b0b7" stroke-width="0.9"/>
<line x1="374.1" y1="526" x2="371.90000000000003" y2="562" stroke="#a9b0b7" stroke-width="0.9"/>
</g>
<path d="M184,450.5 H406 M184,549.5 H406" fill="none" stroke="#000" stroke-width="1" stroke-dasharray="5 10" stroke-dashoffset="-3"/>
<path d="M184.5,450 V549.5 M406.5,450 V549.5" fill="none" stroke="#000" stroke-width="1" stroke-dasharray="5 10" stroke-dashoffset="-3"/>
<path d="M189.5,450.5 H286" fill="none" stroke="#b4cfe0" stroke-width="1" stroke-dasharray="5 10" stroke-dashoffset="2.5"/>
<rect x="178.5" y="444.5" width="11" height="11" fill="#bbb"/>
<rect x="179" y="445" width="10" height="10" fill="#000"/>
<rect x="289.5" y="444.5" width="11" height="11" fill="#bbb"/>
<rect x="290" y="445" width="10" height="10" fill="#000"/>
<rect x="400.5" y="444.5" width="11" height="11" fill="#bbb"/>
<rect x="401" y="445" width="10" height="10" fill="#000"/>
<rect x="178.5" y="491.5" width="11" height="11" fill="#bbb"/>
<rect x="179" y="492" width="10" height="10" fill="#000"/>
<rect x="400.5" y="491.5" width="11" height="11" fill="#bbb"/>
<rect x="401" y="492" width="10" height="10" fill="#000"/>
<rect x="178.5" y="544.0" width="11" height="11" fill="#bbb"/>
<rect x="179" y="544.5" width="10" height="10" fill="#000"/>
<rect x="289.5" y="544.0" width="11" height="11" fill="#bbb"/>
<rect x="290" y="544.5" width="10" height="10" fill="#000"/>
<rect x="400.5" y="544.0" width="11" height="11" fill="#bbb"/>
<rect x="401" y="544.5" width="10" height="10" fill="#000"/>
<circle cx="416.3" cy="435.3" r="5.3" fill="#0a1cf0"/>
<defs><pattern id="st" width="3" height="5" patternUnits="userSpaceOnUse"><rect width="3" height="5" fill="#f1e7ed"/><rect x="1" y="0" width="0.7" height="4" fill="#d2b8c8"/></pattern><filter id="bl"><feGaussianBlur stdDeviation="0.45"/></filter></defs>
<g fill="url(#st)" stroke="#e3d2dc" stroke-width="0.6" filter="url(#bl)"><text transform="translate(165.63,633.5) scale(1.046,1)" font-size="64.2" font-family="Liberation Sans">M</text><text transform="translate(218.41,633.5) scale(0.848,1)" font-size="64.2" font-family="Liberation Sans">Y</text><text transform="translate(271.37,633.5) scale(0.940,1)" font-size="64.2" font-family="Liberation Sans">H</text><text transform="translate(306.92,633.5) scale(0.756,1)" font-size="64.2" font-family="Liberation Sans">E</text><text transform="translate(339.81,633.5) scale(0.816,1)" font-size="64.2" font-family="Liberation Sans">R</text><text transform="translate(375.71,633.5) scale(0.869,1)" font-size="64.2" font-family="Liberation Sans">O</text></g>
<circle cx="852.6" cy="176.4" r="15" fill="none" stroke="#f2bd00" stroke-width="3.2"/>
<path d="M852.6,154 L855.2,173.6 L871.5,176.4 L855.2,179.2 L852.6,197 L850,179.2 L833,176.4 L850,173.6 Z" fill="#8b4c3c"/><line x1="852.6" y1="173" x2="852.6" y2="180" stroke="#c89080" stroke-width="0.6"/>
<text x="856" y="170.8" font-size="19.5" font-weight="bold" font-family="Liberation Serif" fill="#111" textLength="15" lengthAdjust="spacingAndGlyphs" stroke="#111" stroke-width="0.5">N</text>
<path d="M843,212 A9.5,9.5 0 0 1 862,212 Z" fill="#f4e09a" stroke="#c0652b" stroke-width="1.5"/>
<line x1="852.6" y1="204" x2="852.6" y2="211" stroke="#111" stroke-width="1.3"/>
<rect x="494" y="154" width="2.2" height="58" fill="#c2622e"/>
<rect x="496.2" y="154" width="2" height="58" fill="#e9c487"/>
<rect x="498.2" y="154" width="2.2" height="58" fill="#fbe9a0"/>
<rect x="500.4" y="154" width="1.8" height="58" fill="#fbe2d3"/>
<rect x="502.2" y="154" width="2" height="58" fill="#dba060"/>
</svg>

<!-- right panel -->
<svg class="a" style="left:900px;top:132px" width="160" height="30" viewBox="900 132 160 30">
<defs><linearGradient id="lk" x1="0" y1="0" x2="1" y2="1"><stop offset="0" stop-color="#fbe04a"/><stop offset="1" stop-color="#f3a51c"/></linearGradient></defs>
<rect x="908.5" y="139.2" width="7.8" height="6.8" rx="1.8" fill="#fff" stroke="#5d9ae0" stroke-width="1.1"/><path d="M912.4,140.2 L913.1,141.9 L914.8,142.6 L913.1,143.29999999999998 L912.4,145.0 L911.6999999999999,143.29999999999998 L910.0,142.6 L911.6999999999999,141.9 Z" fill="#111"/>
<rect x="919.6" y="143.8" width="7.8" height="6.8" rx="1.8" fill="#fff" stroke="#5d9ae0" stroke-width="1.1"/><path d="M923.5,144.8 L924.2,146.50000000000003 L925.9,147.20000000000002 L924.2,147.9 L923.5,149.60000000000002 L922.8,147.9 L921.1,147.20000000000002 L922.8,146.50000000000003 Z" fill="#111"/>
<rect x="908.5" y="150.3" width="7.8" height="6.8" rx="1.8" fill="#fff" stroke="#5d9ae0" stroke-width="1.1"/><path d="M912.4,151.3 L913.1,153.00000000000003 L914.8,153.70000000000002 L913.1,154.4 L912.4,156.10000000000002 L911.6999999999999,154.4 L910.0,153.70000000000002 L911.6999999999999,153.00000000000003 Z" fill="#111"/>
<rect x="918.3" y="140.6" width="4.6" height="1.2" fill="#555"/><rect x="918.3" y="154.4" width="4.6" height="1.2" fill="#555"/>
<rect x="940.5" y="139.2" width="7.8" height="6.8" rx="1.8" fill="#111" stroke="#5d9ae0" stroke-width="1.1"/><path d="M944.4,140.2 L945.1,141.9 L946.8,142.6 L945.1,143.29999999999998 L944.4,145.0 L943.6999999999999,143.29999999999998 L942.0,142.6 L943.6999999999999,141.9 Z" fill="#fff"/>
<rect x="951.6" y="143.8" width="7.8" height="6.8" rx="1.8" fill="#111" stroke="#5d9ae0" stroke-width="1.1"/><path d="M955.5,144.8 L956.2,146.50000000000003 L957.9,147.20000000000002 L956.2,147.9 L955.5,149.60000000000002 L954.8,147.9 L953.1,147.20000000000002 L954.8,146.50000000000003 Z" fill="#fff"/>
<rect x="940.5" y="150.3" width="7.8" height="6.8" rx="1.8" fill="#111" stroke="#5d9ae0" stroke-width="1.1"/><path d="M944.4,151.3 L945.1,153.00000000000003 L946.8,153.70000000000002 L945.1,154.4 L944.4,156.10000000000002 L943.6999999999999,154.4 L942.0,153.70000000000002 L943.6999999999999,153.00000000000003 Z" fill="#fff"/>
<rect x="950.3" y="140.6" width="4.6" height="1.2" fill="#555"/><rect x="950.3" y="154.4" width="4.6" height="1.2" fill="#555"/>
<path d="M976.5,146 V142.5 Q976.5,138.3 982.4,138.3 Q988.3,138.3 988.3,142.5 V146" fill="none" stroke="#9a9a9a" stroke-width="1.6"/>
<rect x="974.3" y="145.7" width="16.3" height="11.6" fill="url(#lk)" stroke="#ee8f10" stroke-width="1"/>
<path d="M1006.5,146 V142.5 Q1006.5,138.3 1012.3,138.3 Q1018.1,138.3 1018.1,142.5 V146" fill="none" stroke="#9a9a9a" stroke-width="1.6"/>
<rect x="1004.3" y="145.7" width="16" height="11.6" fill="#fff" stroke="#111" stroke-width="1.2"/>
<path d="M1005,146.5 L1019.5,156.8 M1019.5,146.5 L1005,156.8" stroke="#111" stroke-width="1.1"/>
<path d="M1035.5,146 V142.5 Q1035.5,138.3 1041.3,138.3 Q1047,138.3 1047,142 V143" fill="none" stroke="#9a9a9a" stroke-width="1.6"/>
<rect x="1033.5" y="145.7" width="16.3" height="11.6" fill="url(#lk)" stroke="#ee8f10" stroke-width="1"/>
</svg>
<div class="a" style="left:898px;top:160px;width:315px;height:340px;background:#fff;border:1px solid #c6c6c6"></div>
<div class="a" style="left:899px;top:161px;width:302px;height:30px;background:#f2f3f2"></div>
<div class="a" style="left:962px;top:161px;width:32px;height:30px;background:#fff"></div>
<div class="a" style="left:935px;top:168px;font-size:11.8px;line-height:14px;color:#111">2:2</div>
<div class="a" style="left:1002px;top:168px;font-size:11.6px;line-height:14px;color:#111">Column</div>
<div class="a" style="left:899px;top:192px;width:302px;height:33px;background:#dcdcdc"></div>
<div class="a" style="left:962px;top:192px;width:32px;height:33px;background:#fff"></div>
<div class="a" style="left:935px;top:201px;font-size:11.8px;line-height:14px;color:#111">2:3</div>
<div class="a" style="left:1002px;top:201px;font-size:11.6px;line-height:14px;color:#111">Fill</div>
<div class="a" style="left:899px;top:226px;width:302px;height:33px;background:#dcdcdc"></div>
<div class="a" style="left:962px;top:226px;width:32px;height:33px;background:#fff"></div>
<div class="a" style="left:935px;top:235px;font-size:11.8px;line-height:14px;color:#111">2:4</div>
<div class="a" style="left:1002px;top:235px;font-size:11.6px;line-height:14px;color:#111">Run</div>
<div class="a" style="left:899px;top:260px;width:302px;height:33px;background:#dcdcdc"></div>
<div class="a" style="left:962px;top:260px;width:32px;height:33px;background:#fff"></div>
<div class="a" style="left:935px;top:269px;font-size:11.8px;line-height:14px;color:#111">2:5</div>
<div class="a" style="left:1002px;top:269px;font-size:11.6px;line-height:14px;color:#111">Run</div>
<div class="a" style="left:899px;top:294px;width:302px;height:33px;background:#dcdcdc"></div>
<div class="a" style="left:962px;top:294px;width:32px;height:33px;background:#fff"></div>
<div class="a" style="left:935px;top:303px;font-size:11.8px;line-height:14px;color:#111">2:6</div>
<div class="a" style="left:1002px;top:303px;font-size:11.6px;line-height:14px;color:#111">Run</div>
<div class="a" style="left:899px;top:328px;width:302px;height:33px;background:#dcdcdc"></div>
<div class="a" style="left:962px;top:328px;width:32px;height:33px;background:#fff"></div>
<div class="a" style="left:935px;top:337px;font-size:11.8px;line-height:14px;color:#111">2:7</div>
<div class="a" style="left:1002px;top:337px;font-size:11.6px;line-height:14px;color:#111">Fill</div>
<div class="a" style="left:899px;top:362px;width:302px;height:33px;background:#dcdcdc"></div>
<div class="a" style="left:962px;top:362px;width:32px;height:33px;background:#fff"></div>
<div class="a" style="left:935px;top:371px;font-size:11.8px;line-height:14px;color:#111">2:8</div>
<div class="a" style="left:1002px;top:371px;font-size:11.6px;line-height:14px;color:#111">Run</div>
<div class="a" style="left:899px;top:396px;width:302px;height:33px;background:#dcdcdc"></div>
<div class="a" style="left:962px;top:396px;width:32px;height:33px;background:#fff"></div>
<div class="a" style="left:935px;top:405px;font-size:11.8px;line-height:14px;color:#111">2:9</div>
<div class="a" style="left:1002px;top:405px;font-size:11.6px;line-height:14px;color:#111">Fill</div>
<div class="a" style="left:899px;top:430px;width:302px;height:33px;background:#dcdcdc"></div>
<div class="a" style="left:962px;top:430px;width:32px;height:33px;background:#fff"></div>
<div class="a" style="left:935px;top:439px;font-size:11.8px;line-height:14px;color:#111">2:10</div>
<div class="a" style="left:1002px;top:439px;font-size:11.6px;line-height:14px;color:#111">Run</div>
<div class="a" style="left:899px;top:464px;width:302px;height:35px;background:#fff"></div>
<div class="a" style="left:962px;top:464px;width:32px;height:35px;background:#fff"></div>
<div class="a" style="left:935px;top:474px;font-size:11.8px;line-height:14px;color:#111">2:11</div>
<div class="a" style="left:1002px;top:474px;font-size:11.6px;line-height:14px;color:#111">Fill</div>
<div class="a" style="left:1201px;top:161px;width:11px;height:338px;background:#fafafa;border-left:1px solid #e8e8e8"></div>
<div class="a" style="left:1204px;top:229px;width:6px;height:205px;border-radius:3px;background:#c3c3c3"></div>
<svg class="a" style="left:0;top:0" width="1225" height="795">
<ellipse cx="978" cy="175.5" rx="14.5" ry="15.5" fill="#263545"/>
<line x1="970" y1="168" x2="970" y2="172" stroke="#dde6ee" stroke-width="0.7"/>
<line x1="974" y1="164" x2="974" y2="170" stroke="#dde6ee" stroke-width="0.7"/>
<line x1="979.5" y1="161" x2="979.5" y2="184" stroke="#dde6ee" stroke-width="0.7"/>
<line x1="981" y1="170" x2="981" y2="178" stroke="#dde6ee" stroke-width="0.7"/>
<line x1="972" y1="181" x2="972" y2="186" stroke="#dde6ee" stroke-width="0.7"/>
<line x1="984" y1="176" x2="984" y2="180" stroke="#dde6ee" stroke-width="0.7"/>
<line x1="976" y1="179" x2="976" y2="188" stroke="#dde6ee" stroke-width="0.7"/>
<path d="M962,201.3 H980 L993.5,216.8 H987 L976.5,205.2 H967.5 V216.8 H962 Z" fill="#5b3a26"/>
<g stroke="#fff" stroke-width="0.9"><line x1="962" y1="203.6" x2="995" y2="203.6"/><line x1="962" y1="206.3" x2="995" y2="206.3"/><line x1="962" y1="209" x2="995" y2="209"/><line x1="962" y1="211.7" x2="995" y2="211.7"/><line x1="962" y1="214.4" x2="995" y2="214.4"/></g>
<path d="M963.5,251 V234.5 H979 L994,251" fill="none" stroke="#5b3a26" stroke-width="1.1"/>
<path d="M962,276.5 H994" fill="none" stroke="#5b3a26" stroke-width="1.1"/>
<path d="M963.5,303.5 V318.5 H994 L979.5,303.5 Z" fill="none" stroke="#5b3a26" stroke-width="1.1"/>
<path d="M963,337.8 H988 Q993,339 994,344 V351 H990.2 A7.7,7.2 0 0 0 974.8,351 H963 Z" fill="#5b3a26"/>
<line x1="963" y1="339.5" x2="987" y2="339.5" stroke="#fff" stroke-width="0.8"/>
<path d="M963.5,370 V384.5 H970 Q975,376 980,376 Q985,376 988,384.5 H993.5 V377 Q991,372 986,371" fill="none" stroke="#5b3a26" stroke-width="1.1"/>
<path d="M978,378 Q982,373 987,375" fill="none" stroke="#5b3a26" stroke-width="1"/>
<path d="M963,401 Q963,399 966,399 H991 Q994,399 994,402 V428 H984.7 Q983.5,418 979,418 Q974.5,418 973.7,428 H963 Z" fill="#5b3a26"/>
<g stroke="#fff" stroke-width="0.9" stroke-dasharray="3 2 2 3">
<line x1="963" y1="401.5" x2="994" y2="401.5" stroke-dashoffset="0.0"/>
<line x1="963" y1="404.8" x2="994" y2="404.8" stroke-dashoffset="1.7"/>
<line x1="963" y1="408.1" x2="994" y2="408.1" stroke-dashoffset="3.4"/>
<line x1="963" y1="411.4" x2="994" y2="411.4" stroke-dashoffset="5.1"/>
<line x1="963" y1="414.7" x2="994" y2="414.7" stroke-dashoffset="6.8"/>
<line x1="963" y1="418.0" x2="994" y2="418.0" stroke-dashoffset="8.5"/>
<line x1="963" y1="421.3" x2="994" y2="421.3" stroke-dashoffset="10.2"/>
<line x1="963" y1="424.6" x2="994" y2="424.6" stroke-dashoffset="11.9"/>
</g>
<path d="M963.5,461.5 V436 Q963.5,434.5 966,434.5 H991 Q993.5,434.5 993.5,437 V461.5 H983 Q982,452 977,452 Q971,452 970,461.5 Z" fill="none" stroke="#5b3a26" stroke-width="1.1"/>
<g stroke="#cfe2ec" stroke-width="1">
<line x1="970" y1="468" x2="986" y2="468"/>
<line x1="966" y1="471" x2="990" y2="471"/>
<line x1="964" y1="474" x2="992" y2="474"/>
<line x1="963" y1="477" x2="993" y2="477"/>
<line x1="962" y1="480" x2="994" y2="480"/>
<line x1="962" y1="483" x2="994" y2="483"/>
<line x1="963" y1="486" x2="993" y2="486"/>
<line x1="965" y1="489" x2="991" y2="489"/>
<line x1="967" y1="492" x2="989" y2="492"/>
<line x1="971" y1="495" x2="985" y2="495"/>
<line x1="978" y1="466" x2="978" y2="497" stroke="#d6e6ee"/>
</g>
</svg>
<div class="a" style="left:898px;top:500px;width:315px;height:10px;background:#f8f8f8;border-bottom:1px solid #d6d6d6"></div>
<div class="a" style="left:1051px;top:501px;width:8px;height:8px;border-radius:50%;background:#d4d4d4;border:1px solid #c2c2c2"></div>
<div class="a" style="left:900px;top:522px;width:306px;height:226px;background:#e3e3e3;border:1px solid #dcdcdc;border-radius:4px"></div>
<div class="a" style="left:1030px;top:514px;width:51px;height:18px;background:linear-gradient(#fdfdfd,#f3f3f3);border:1px solid #bdbdbd;border-radius:4px;font-size:11.3px;letter-spacing:0.3px;line-height:16px;text-align:center;color:#222">Color</div>
<div class="a" style="left:925px;top:542px;width:73px;height:16px;background:linear-gradient(#fbfbfb,#eeeeee);border:1px solid #b5b5b5;border-radius:3px;font-size:11.2px;letter-spacing:0.25px;line-height:15px;text-align:center;color:#222">Thread</div>
<div class="a" style="left:1010px;top:541px;width:73px;height:16px;background:linear-gradient(#fbfbfb,#eeeeee);border:1px solid #b5b5b5;border-radius:3px;font-size:11.2px;letter-spacing:0.25px;line-height:15px;text-align:center;color:#222">1 Color...</div>
<div class="a" style="left:1093px;top:542px;width:73px;height:16px;background:linear-gradient(#fbfbfb,#eeeeee);border:1px solid #b5b5b5;border-radius:3px;font-size:11.2px;letter-spacing:0.25px;line-height:15px;text-align:center;color:#222">Preferred</div>
<div class="a" style="left:939px;top:565px;font-size:10.6px;line-height:14px;color:#333;letter-spacing:0.58px">Click below to change individual colors.</div>
<div class="a" style="left:919px;top:587px;width:273px;height:148px;background:#fff;border:1px solid #c2c2c2"></div>
<div class="a" style="left:920px;top:588px;width:271px;height:37px;background:#dcdcdc"></div>
<div class="a" style="left:920px;top:588px;width:75px;height:37px;background:#dde9f0"></div>
<div class="a" style="left:999px;top:589px;font-size:9.5px;line-height:12.8px;color:#111;letter-spacing:0.5px">1: Mettler PolySheen<br>3350</div>
<div class="a" style="left:920px;top:625px;width:271px;height:1px;background:#d0d0d0"></div>
<div class="a" style="left:920px;top:663px;width:271px;height:1px;background:#c8c8c8"></div>
<div class="a" style="left:920px;top:701px;width:271px;height:1px;background:#c8c8c8"></div>

<!-- dialog -->
<div class="a" style="left:438px;top:212px;width:478px;height:538px;border-radius:5px;background:#ececec;box-shadow:0 0 0 0.5px #b9b9b9, 0 10px 30px rgba(0,0,0,.32), 0 0 8px rgba(0,0,0,.12);overflow:hidden">
<div class="a" style="left:0;top:0;width:478px;height:22px;background:linear-gradient(#ebebeb,#d6d6d6);border-bottom:1px solid #b9b9b9"></div>
<div class="a" style="left:9px;top:5px;width:12px;height:12px;border-radius:50%;background:#fc605c;border:0.5px solid #df4744"></div>
<div class="a" style="left:29px;top:5px;width:12px;height:12px;border-radius:50%;background:#d6d6d6;border:1px solid #c5c5c5"></div>
<div class="a" style="left:49px;top:5px;width:12px;height:12px;border-radius:50%;background:#d6d6d6;border:1px solid #c5c5c5"></div>
<div class="a" style="left:0;top:4px;width:478px;text-align:center;font-size:13.3px;line-height:16px;color:#4a4a4a">Thread</div>
<div class="a" style="left:16px;top:39px;width:442px;height:479px;background:#e3e3e3;border:1px solid #dadada;border-radius:4px"></div>
</div>
<div class="a" style="left:608px;top:241px;width:135px;height:21px;border-radius:4px;background:#fff;border:1px solid #c6c6c6;box-shadow:0 0.5px 1px rgba(0,0,0,.12)"></div>
<div class="a" style="left:608px;top:241px;width:57px;height:21px;border-radius:4px 0 0 4px;background:linear-gradient(#4aa0fb,#1a6ff5);"></div>
<div class="a" style="left:608px;top:244px;width:57px;text-align:center;font-size:13.3px;line-height:16px;color:#fff">Color</div>
<div class="a" style="left:665px;top:244px;width:77px;text-align:center;font-size:13.3px;line-height:16px;color:#262626">Applique</div>
<div class="a" style="left:457px;top:279px;width:110px;height:71px;border:1px solid #a8a8a8"></div>
<div class="a" style="left:465px;top:270px;width:34px;height:14px;background:#e3e3e3"></div>
<div class="a" style="left:469px;top:268px;font-size:11.8px;line-height:16px;color:#333">View</div>
<div class="a" style="left:474px;top:297px;width:16px;height:16px;border-radius:50%;background:linear-gradient(#3c94fb,#1f73f5);border:1px solid #1f6de0"></div>
<div class="a" style="left:479px;top:302px;width:6px;height:6px;border-radius:50%;background:#fff"></div>
<div class="a" style="left:494px;top:298px;font-size:13.3px;line-height:16px;color:#262626">Threads</div>
<div class="a" style="left:474px;top:317px;width:16px;height:16px;border-radius:50%;background:#fff;border:1px solid #b5b5b5"></div>
<div class="a" style="left:494px;top:318px;font-size:13.3px;line-height:16px;color:#262626">Palettes</div>
<div class="a" style="left:587px;top:281px;width:300px;height:21px;background:#fff;border:1px solid #c4c4c4;border-radius:2px"></div>
<div class="a" style="left:869px;top:281px;width:18px;height:21px;background:linear-gradient(#4aa0fb,#1a6ff5);border-radius:0 3px 3px 0"></div>
<svg class="a" style="left:869px;top:281px" width="18" height="21"><path d="M5.5,9 L9,12.5 L12.5,9" fill="none" stroke="#fff" stroke-width="1.6"/></svg>
<div class="a" style="left:591px;top:285px;font-size:13.4px;line-height:16px;color:#262626">Mettler PolySheen</div>
<div class="a" style="left:586px;top:311px;font-size:13.4px;line-height:16px;color:#262626">Sort by:</div>
<div class="a" style="left:641px;top:310px;width:16px;height:16px;border-radius:50%;background:linear-gradient(#3c94fb,#1f73f5);border:1px solid #1f6de0"></div>
<div class="a" style="left:646px;top:315px;width:6px;height:6px;border-radius:50%;background:#fff"></div>
<div class="a" style="left:660px;top:311px;font-size:13.4px;line-height:16px;color:#262626">Color</div>
<div class="a" style="left:727px;top:310px;width:16px;height:16px;border-radius:50%;background:#fff;border:1px solid #b5b5b5"></div>
<div class="a" style="left:746px;top:311px;font-size:13.4px;line-height:16px;color:#262626">Name</div>
<div class="a" style="left:813px;top:310px;width:16px;height:16px;border-radius:50%;background:#fff;border:1px solid #b5b5b5"></div>
<div class="a" style="left:832px;top:311px;font-size:13.4px;line-height:16px;color:#262626">Number</div>
<div class="a" style="left:586px;top:335px;font-size:13.4px;line-height:16px;color:#262626">Search:</div>
<div class="a" style="left:640px;top:332px;width:207px;height:22px;background:#fff;border:1px solid #c4c4c4"></div>
<div class="a" style="left:857px;top:334px;width:31px;height:20px;background:#f7f7f7;border:1px solid #d0d0d0;border-radius:3px"></div>
<div class="a" style="left:857px;top:336px;width:31px;text-align:center;font-size:13.3px;line-height:16px;color:#5a5a5a">Go</div>
<div class="a" style="left:454px;top:359px;width:436px;height:328px;border:4px solid #79a4ee;border-radius:4px;background:#fff;overflow:hidden">
<div class="a" style="left:0;top:0px;width:75px;height:13px;background:#4b3f3b"></div>
<div class="a" style="left:0;top:13px;width:75px;height:38px;background:#6b5d52"></div>
<div class="a" style="left:79px;top:15px;font-size:9.5px;line-height:12.7px;color:#111;letter-spacing:0.6px">59: Mettler PolySheen<br>1876</div>
<div class="a" style="left:0;top:51px;width:75px;height:38px;background:#6b4a35"></div>
<div class="a" style="left:0;top:51px;width:75px;height:1px;background:#4c9a30"></div>
<div class="a" style="left:75px;top:51px;width:338px;height:38px;background:#4f9c34;border-top:1px solid #3f8a28"></div>
<div class="a" style="left:79px;top:53px;font-size:9.5px;line-height:12.7px;color:#111;letter-spacing:0.6px">60: Mettler PolySheen<br>1346</div>
<div class="a" style="left:0;top:89px;width:75px;height:38px;background:#734d30"></div>
<div class="a" style="left:79px;top:91px;font-size:9.5px;line-height:12.7px;color:#111;letter-spacing:0.6px">61: Mettler PolySheen<br>1565</div>
<div class="a" style="left:0;top:127px;width:75px;height:38px;background:#7d5f58"></div>
<div class="a" style="left:79px;top:129px;font-size:9.5px;line-height:12.7px;color:#111;letter-spacing:0.6px">62: Mettler PolySheen<br>776</div>
<div class="a" style="left:0;top:165px;width:75px;height:38px;background:#7d5530"></div>
<div class="a" style="left:79px;top:167px;font-size:9.5px;line-height:12.7px;color:#111;letter-spacing:0.6px">63: Mettler PolySheen<br>1055</div>
<div class="a" style="left:0;top:203px;width:75px;height:38px;background:#7d5530"></div>
<div class="a" style="left:79px;top:205px;font-size:9.5px;line-height:12.7px;color:#111;letter-spacing:0.6px">64: Mettler PolySheen<br>465</div>
<div class="a" style="left:0;top:241px;width:75px;height:38px;background:#7d4a35"></div>
<div class="a" style="left:79px;top:243px;font-size:9.5px;line-height:12.7px;color:#111;letter-spacing:0.6px">65: Mettler PolySheen<br>1355</div>
<div class="a" style="left:0;top:279px;width:75px;height:42px;background:#7f5634"></div>
<div class="a" style="left:79px;top:281px;font-size:9.5px;line-height:12.7px;color:#111;letter-spacing:0.6px">66: Mettler PolySheen<br>933</div>
<div class="a" style="left:413px;top:0;width:16px;height:320px;background:#fafafa;border-left:1px solid #ededed"></div>
<div class="a" style="left:418px;top:42px;width:7px;height:18px;border-radius:4px;background:#c2c2c2"></div>
</div>
<div class="a" style="left:768px;top:693px;width:55px;height:21px;background:#fff;border:1px solid #cfcfcf;border-radius:4px;box-shadow:0 0.5px 1px rgba(0,0,0,.1)"></div>
<div class="a" style="left:768px;top:696px;width:55px;text-align:center;font-size:13.3px;line-height:16px;color:#555">Cancel</div>
<div class="a" style="left:832px;top:693px;width:56px;height:21px;background:linear-gradient(#fefefe,#f6f6f6);border:1px solid #cfcfcf;border-radius:4px;box-shadow:0 0.5px 1px rgba(0,0,0,.1)"></div>
<div class="a" style="left:832px;top:695px;width:56px;text-align:center;font-size:13.3px;line-height:16px;color:#4a4a4a">OK</div>

<svg class="a" style="left:0;top:0" width="1225" height="795" viewBox="0 0 1225 795">
<defs><filter id="sh" x="-20%" y="-20%" width="140%" height="140%"><feGaussianBlur in="SourceAlpha" stdDeviation="1.6"/><feOffset dx="-1.5" dy="2" result="o"/><feComponentTransfer><feFuncA type="linear" slope="0.45"/></feComponentTransfer><feMerge><feMergeNode/><feMergeNode in="SourceGraphic"/></feMerge></filter></defs>
<g fill="#f2487f" filter="url(#sh)">
<path d="M1033.0,208.7 L1063.8,221.6 L1050.1,223.3 L1139.6,339.2 L1132.4,344.8 L1042.8,228.9 L1037.7,241.7 Z"/>
<path d="M1033.0,449.8 L1040.8,417.4 L1044.7,430.6 L1132.6,336.9 L1139.4,343.1 L1051.4,436.9 L1064.9,439.9 Z"/>
<path d="M959.0,606.2 L992.0,610.9 L979.2,616.0 L1074.1,689.5 L1068.5,696.7 L973.6,623.3 L971.8,637.0 Z"/>
<path d="M834.6,704.6 L806.2,722.1 L812.8,710.0 L641.2,716.1 L640.8,706.9 L812.5,700.8 L805.0,689.1 Z"/>
</g>
<circle cx="1160" cy="338" r="23.7" fill="#0fab8c" stroke="#0d6c5b" stroke-width="1.1"/><path d="M1148,354.5 Q1160,359.5 1172,354.5" fill="none" stroke="#45c9ab" stroke-width="1.3"/><text x="1160.3" y="349.2" text-anchor="middle" font-family="Liberation Sans" font-weight="bold" font-size="31" fill="#f6f6f6" stroke="#f6f6f6" stroke-width="1.2">1</text>
<circle cx="1071.3" cy="693.1" r="23.7" fill="#0fab8c" stroke="#0d6c5b" stroke-width="1.1"/><path d="M1059.3,709.6 Q1071.3,714.6 1083.3,709.6" fill="none" stroke="#45c9ab" stroke-width="1.3"/><text x="1071.6" y="704.3000000000001" text-anchor="middle" font-family="Liberation Sans" font-weight="bold" font-size="31" fill="#f6f6f6" stroke="#f6f6f6" stroke-width="1.2">2</text>
<circle cx="768.1" cy="431.9" r="23.7" fill="#0fab8c" stroke="#0d6c5b" stroke-width="1.1"/><path d="M756.1,448.4 Q768.1,453.4 780.1,448.4" fill="none" stroke="#45c9ab" stroke-width="1.3"/><text x="768.4" y="443.09999999999997" text-anchor="middle" font-family="Liberation Sans" font-weight="bold" font-size="31" fill="#f6f6f6" stroke="#f6f6f6" stroke-width="1.2">3</text>
<circle cx="640.9" cy="711" r="23.7" fill="#0fab8c" stroke="#0d6c5b" stroke-width="1.1"/><path d="M628.9,727.5 Q640.9,732.5 652.9,727.5" fill="none" stroke="#45c9ab" stroke-width="1.3"/><text x="641.1999999999999" y="722.2" text-anchor="middle" font-family="Liberation Sans" font-weight="bold" font-size="31" fill="#f6f6f6" stroke="#f6f6f6" stroke-width="1.2">4</text>
</svg>
<!-- status -->
<div class="a" style="font-size:13.4px;left:20px;top:768px;line-height:16px;color:#2a2a2a">Zoom: 122%&nbsp; Cursor: 4 (7/8)" x 2 (1/8)"</div>
<div class="a" style="font-size:13.4px;left:555px;top:768px;line-height:16px;color:#2a2a2a">Hoop: 5 (1/8) x 7 (1/16)</div>
<div class="a" style="font-size:13.5px;left:736px;top:768px;line-height:16px;color:#111">Selected: 1 (15/16)" x (7/8)"</div>
<div class="a" style="font-size:13.4px;left:952px;top:768px;line-height:16px;color:#111">Stitches:1008</div>
<div class="a" style="font-size:13.4px;left:1072px;top:768px;line-height:16px;color:#2a2a2a">Ndls/Cols: 1/1</div>
<div class="a" style="left:1219px;top:0;width:6px;height:6px;background:radial-gradient(circle at 0 6px, transparent 5.5px, #1f6a94 6px)"></div>
<div class="a" style="left:0;top:789px;width:6px;height:6px;background:radial-gradient(circle at 6px 0, transparent 5.5px, #2a5a94 6px)"></div>
<div class="a" style="left:0;top:0;width:4px;height:4px;background:radial-gradient(circle at 4px 4px, transparent 3.5px, #1f6a94 4px)"></div>
</body></html>
